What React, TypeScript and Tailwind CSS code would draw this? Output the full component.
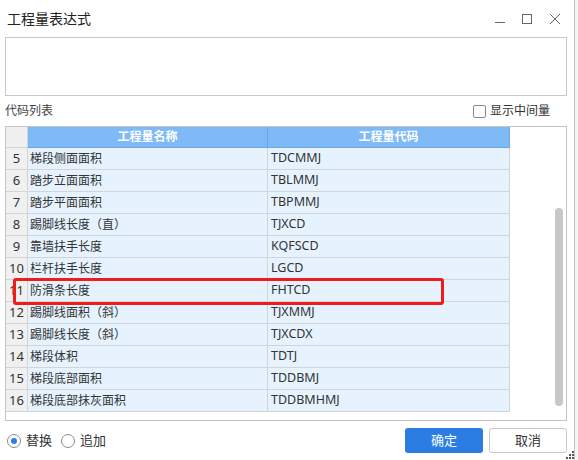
const rows = [
  { no: '5', name: '梯段侧面面积', code: 'TDCMMJ' },
  { no: '6', name: '踏步立面面积', code: 'TBLMMJ' },
  { no: '7', name: '踏步平面面积', code: 'TBPMMJ' },
  { no: '8', name: '踢脚线长度（直）', code: 'TJXCD' },
  { no: '9', name: '靠墙扶手长度', code: 'KQFSCD' },
  { no: '10', name: '栏杆扶手长度', code: 'LGCD' },
  { no: '11', name: '防滑条长度', code: 'FHTCD' },
  { no: '12', name: '踢脚线面积（斜）', code: 'TJXMMJ' },
  { no: '13', name: '踢脚线长度（斜）', code: 'TJXCDX' },
  { no: '14', name: '梯段体积', code: 'TDTJ' },
  { no: '15', name: '梯段底部面积', code: 'TDDBMJ' },
  { no: '16', name: '梯段底部抹灰面积', code: 'TDDBMHMJ' },
];

const font = { fontFamily: '"Noto Sans", "Noto Sans CJK SC", sans-serif' };

// window buttons: minimise / maximise / close
function WinControls() {
  return (
    <svg width="70" height="14" viewBox="0 0 70 14" className="text-[#666666]">
      <line x1="0" y1="10.5" x2="10" y2="10.5" stroke="currentColor" strokeWidth="1" />
      <rect x="27.5" y="2.5" width="9" height="9" fill="none" stroke="currentColor" strokeWidth="1" />
      <path d="M55 2 L65 12 M65 2 L55 12" stroke="currentColor" strokeWidth="1" />
    </svg>
  );
}

export default function App() {
  return (
    <div className="w-[578px] h-[460px] bg-[#eeeeee] flex overflow-hidden" style={font}>
      {/* Dialog */}
      <div className="relative w-[575px] h-[460px] bg-white border-r border-[#c4c4c4] flex flex-col text-[#333333]">
        {/* Title bar */}
        <div className="h-[37px] flex items-center pl-[7px] pr-[9px]">
          <span className="text-[14px] text-[#222222] flex-1">工程量表达式</span>
          <WinControls />
        </div>

        {/* Expression box */}
        <div className="mx-[5px] w-[562px] h-[59px] border border-[#c8c8c8]" />

        {/* Label row */}
        <div className="h-[30px] flex items-center px-[5px] w-[572px]">
          <span className="text-[12px] text-[#444444] flex-1">代码列表</span>
          <div className="flex items-center gap-[4px] pr-[17px]">
            <span className="w-[13px] h-[13px] border border-[#8a8a8a] rounded-[2px] bg-white" />
            <span className="text-[12px] text-[#333333]">显示中间量</span>
          </div>
        </div>

        {/* Table box */}
        <div className="relative mx-[5px] w-[562px] h-[295px] border border-[#c4c4c4] flex">
          <div className="flex flex-col w-[504px]">
            {/* Header */}
            <div className="flex h-[21px] text-[12px]">
              <div className="w-[22px] bg-[#f0f0f0] border-r border-b border-[#d4d4d4]" />
              <div className="w-[240px] bg-[#7fb9f6] border-r border-b border-[#6aa6ea] text-white font-bold flex items-center justify-center">
                工程量名称
              </div>
              <div className="w-[242px] bg-[#7fb9f6] border-r border-b border-[#6aa6ea] text-white font-bold flex items-center justify-center">
                工程量代码
              </div>
            </div>
            {rows.map((r) => (
              <div key={r.no} className="flex h-[22px]">
                <div className="w-[22px] bg-[#f0f0f0] border-r border-b border-[#d4d4d4] flex items-center justify-center text-[13px] text-[#333333]">
                  {r.no}
                </div>
                <div className="w-[240px] bg-[#e6f3ff] border-r border-b border-[#d4d4d4] flex items-center pl-[2px] text-[12px] text-[#333333]">
                  {r.name}
                </div>
                <div className="w-[242px] bg-[#e6f3ff] border-r border-b border-[#d4d4d4] flex items-center pl-[3px] text-[12.5px] text-[#333333]">
                  {r.code}
                </div>
              </div>
            ))}
          </div>
          {/* Scrollbar */}
          <div className="flex-1 flex justify-end pr-[3px] pt-[81px]">
            <div className="w-[8px] h-[198px] rounded-[4px] bg-[#c8c8c8]" />
          </div>

          {/* Highlight */}
          <div className="absolute left-[7px] top-[151px] w-[431px] h-[27px] border-[3px] border-[#ee1c1c] rounded-[3px]" />
        </div>

        {/* Bottom row */}
        <div className="flex-1 flex items-center pl-[7px] pr-[7px] w-[574px]">
          <div className="flex items-center text-[13px] text-[#333333]">
            <span className="w-[14px] h-[14px] rounded-full border border-[#8a8a8a] flex items-center justify-center">
              <span className="w-[6px] h-[6px] rounded-full bg-[#2b7de1]" />
            </span>
            <span className="ml-[5px]">替换</span>
            <span className="ml-[9px] w-[14px] h-[14px] rounded-full border border-[#8a8a8a]" />
            <span className="ml-[5px]">追加</span>
          </div>
          <div className="flex-1" />
          <button className="w-[78px] h-[25px] rounded-[3px] bg-[#2b7de1] text-white text-[13px]">确定</button>
          <button className="ml-[6px] w-[78px] h-[25px] rounded-[3px] bg-white border border-[#c8c8c8] text-[#333333] text-[13px]">取消</button>
        </div>

        {/* Resize grip */}
        <svg width="8" height="8" viewBox="0 0 8 8" className="absolute right-[0px] bottom-[1px] text-[#555555]">
          <rect x="6" y="0" width="2" height="2" fill="currentColor" />
          <rect x="3" y="3" width="2" height="2" fill="currentColor" />
          <rect x="6" y="3" width="2" height="2" fill="currentColor" />
          <rect x="0" y="6" width="2" height="2" fill="currentColor" />
          <rect x="3" y="6" width="2" height="2" fill="currentColor" />
          <rect x="6" y="6" width="2" height="2" fill="currentColor" />
        </svg>
      </div>
      <div className="flex-1 bg-[#f4f4f4]" />
    </div>
  );
}
